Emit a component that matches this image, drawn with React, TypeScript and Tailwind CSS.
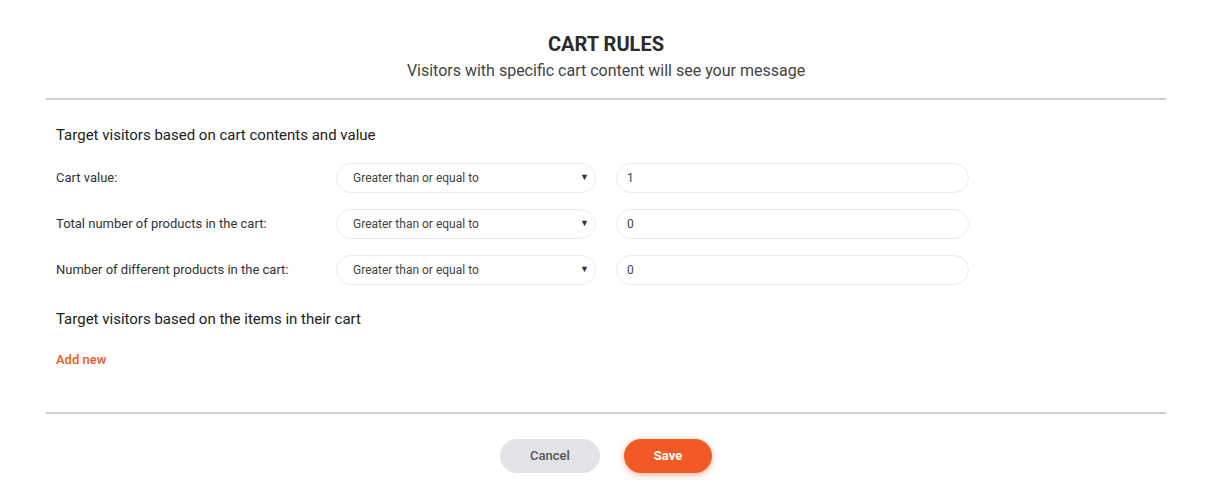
import { useState } from "react";

const rows = [
  { label: "Cart value:", value: "1" },
  { label: "Total number of products in the cart:", value: "0" },
  { label: "Number of different products in the cart:", value: "0" },
];

const Row = ({ label, value }: { label: string; value: string }) => {
  const [val, setVal] = useState(value);
  return (
    <div className="flex items-center h-[30px]">
      <div className="w-[280px] text-[13px] text-[#333]">{label}</div>
      <div className="relative w-[260px] h-[30px] rounded-full border border-[#ececec] bg-white flex items-center pl-[16px] text-[12px] text-[#444]">
        Greater than or equal to
        <span className="absolute right-[6px] top-[7px] text-[9px] text-[#333]">▼</span>
      </div>
      <input
        value={val}
        onChange={(e) => setVal(e.target.value)}
        className="ml-[20px] w-[353px] h-[30px] rounded-full border border-[#ececec] px-[10px] text-[12px] text-[#444] outline-none"
      />
    </div>
  );
};

const App = () => {
  return (
    <div className="min-h-screen bg-white font-['Roboto',sans-serif] text-[#333]">
      <div className="ml-[46px] w-[1120px]">
        <div className="pt-[32px] pb-[16px] text-center border-b-2 border-[#cfcfcf]">
          <h1 className="text-[20px] leading-[24px] font-bold text-[#2b2b2b]">CART RULES</h1>
          <p className="mt-[4px] text-[16px] leading-[22px] text-[#444]">
            Visitors with specific cart content will see your message
          </p>
        </div>

        <div className="px-[10px] pt-[25px] pb-[44px] border-b-2 border-[#cfcfcf]">
          <h2 className="text-[15px] leading-[20px] font-normal text-[#222]">
            Target visitors based on cart contents and value
          </h2>
          <div className="mt-[18px] flex flex-col gap-[16px]">
            {rows.map((r) => (
              <Row key={r.label} label={r.label} value={r.value} />
            ))}
          </div>
          <h2 className="mt-[24px] text-[15px] leading-[20px] font-normal text-[#222]">
            Target visitors based on the items in their cart
          </h2>
          <button className="mt-[23px] block text-[13px] leading-[16px] font-medium text-[#f15a24]">
            Add new
          </button>
        </div>

        <div className="pt-[25px] flex justify-center gap-[24px]">
          <button className="w-[100px] h-[34px] rounded-full bg-[#e2e3e6] text-[13px] font-medium text-[#555]">
            Cancel
          </button>
          <button className="w-[88px] h-[34px] rounded-full bg-[#f15a24] text-[13px] font-bold text-white shadow-[0_2px_6px_rgba(241,90,36,0.45)]">
            Save
          </button>
        </div>
      </div>
    </div>
  );
};

export default App;
